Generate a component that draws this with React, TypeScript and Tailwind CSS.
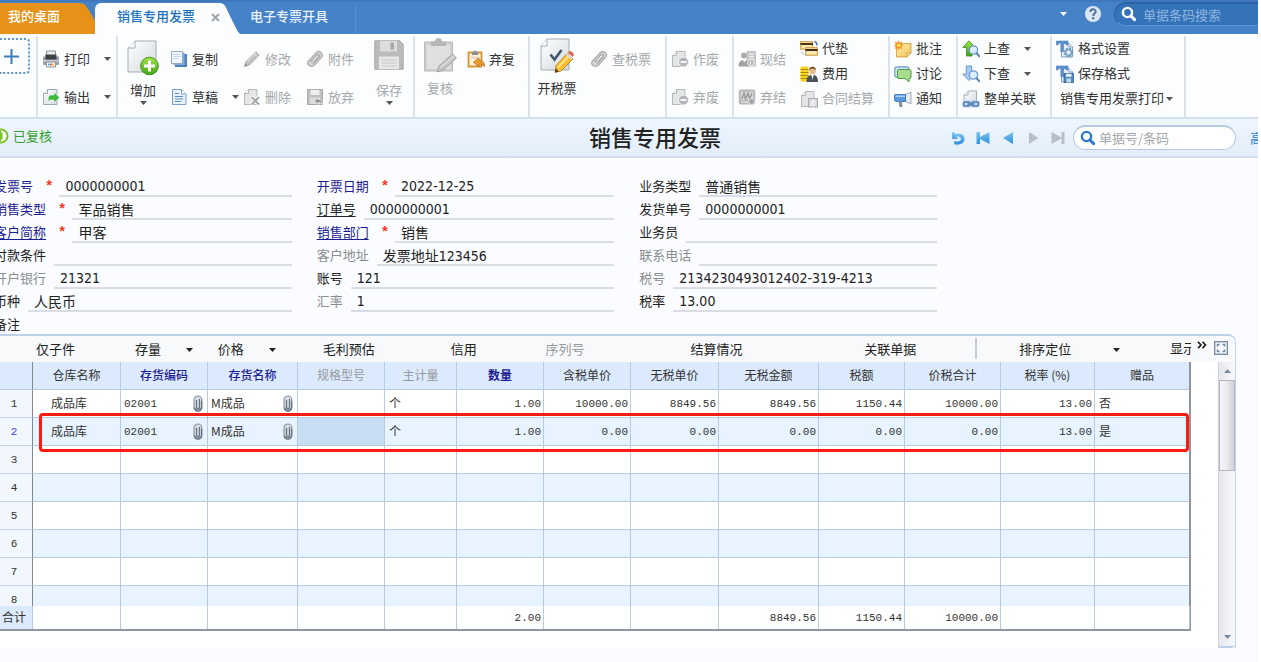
import React from "react";

type IconProps = { className?: string };

const ICON = "block h-[18px] w-[18px] shrink-0";

/* ---------- small helpers ---------- */

function Caret({ className = "text-[#555]" }: IconProps) {
  return (
    <svg viewBox="0 0 7 4" className={`block h-1 w-[7px] shrink-0 ${className}`} aria-hidden="true">
      <path d="M0 0h7L3.5 4z" fill="currentColor" />
    </svg>
  );
}

function SearchGlyph({ className = "" }: IconProps) {
  return (
    <svg viewBox="0 0 16 16" className={`block h-4 w-4 shrink-0 ${className}`} aria-hidden="true">
      <circle cx="6.5" cy="6.5" r="4.6" fill="none" stroke="currentColor" strokeWidth="2.4" />
      <path d="M10 10l3.6 3.600" stroke="currentColor" strokeWidth="3" strokeLinecap="round" />
    </svg>
  );
}

function Gradients() {
  return (
    <svg className="absolute h-0 w-0" aria-hidden="true">
      <defs>
        <linearGradient id="paper" x1="0" y1="0" x2="1" y2="1">
          <stop offset="0" stopColor="#ffffff" />
          <stop offset="1" stopColor="#d3dadd" />
        </linearGradient>
        <linearGradient id="green" x1="0" y1="0" x2="0" y2="1">
          <stop offset="0" stopColor="#a6e34b" />
          <stop offset="1" stopColor="#3fa512" />
        </linearGradient>
        <linearGradient id="navBlue" x1="0" y1="0" x2="0" y2="1">
          <stop offset="0" stopColor="#7cc4ee" />
          <stop offset="1" stopColor="#2f8fdc" />
        </linearGradient>
        <linearGradient id="note" x1="0" y1="0" x2="1" y2="1">
          <stop offset="0" stopColor="#fff0b8" />
          <stop offset="1" stopColor="#f2c04a" />
        </linearGradient>
      </defs>
    </svg>
  );
}

/* ---------- toolbar icons ---------- */

const PrinterIcon = () => (
  <svg viewBox="0 0 18 18" className={ICON}>
    <path d="M4.5 1h9v6h-9z" fill="#e9ebee" stroke="#8b8f96" />
    <path d="M1 6.5h16v7.2a1.3 1.3 0 0 1-1.3 1.3H2.300A1.300 1.300 0 0 1 1 13.700z" fill="#9aa0aa" />
    <path d="M3.500 4.500h11v5h-11z" fill="#3d4046" />
    <path d="M1 10h16v1.500H1z" fill="#c9cdd3" />
    <path d="M4.500 12h9v5h-9z" fill="#fff" stroke="#8b8f96" />
    <path d="M6 13.500h2v2H6z" fill="#4ab4e0" />
    <path d="M8 13.500h2v2H8z" fill="#e66" />
    <path d="M10 13.500h2v2h-2z" fill="#f0c040" />
  </svg>
);

const ExportIcon = () => (
  <svg viewBox="0 0 18 18" className={ICON}>
    <path d="M5.500 1.500H15v15H1.500V5.500z" fill="url(#paper)" stroke="#9aa9b5" />
    <path d="M5.500 1.500v4h-4" fill="#fff" stroke="#9aa9b5" />
    <path d="M9 7h3V4l5.500 5.500L12 15v-3H9c-2 0-2.500 1-2.500 2.500C5.500 10 6.500 7 9 7z" fill="#3fb93a" stroke="#fff" strokeWidth=".6" />
  </svg>
);

const CopyIcon = () => (
  <svg viewBox="0 0 18 18" className={ICON}>
    <path d="M5 4h12v13H5z" fill="#4f83bd" />
    <path d="M3.500 2.500h11v12.500h-11z" fill="#86acd6" />
    <path d="M1.500 1.500h11v12h-11z" fill="#eef5fc" stroke="#92acc6" />
    <path d="M3.500 4.500h7M3.500 6.500h7M3.500 8.500h5" stroke="#c5d7e8" />
  </svg>
);

const DraftIcon = () => (
  <svg viewBox="0 0 18 18" className={ICON}>
    <path d="M2.500 1.500h9l4.500 4.500v10.500H2.500z" fill="#e8f1fb" stroke="#7d9fc4" />
    <path d="M11.500 1.500V6H16" fill="#fff" stroke="#7d9fc4" />
    <path d="M5 5.500h4M5 8.500h8M5 11h8M5 13.500h6" stroke="#5b8cc4" strokeWidth="1.200" />
  </svg>
);

const GrayPencilIcon = () => (
  <svg viewBox="0 0 18 18" className={ICON}>
    <path d="M1.500 16.500l1.500-5L13 1.800l3.300 3.200L6.500 15z" fill="#bfc1c3" stroke="#a3a5a7" strokeWidth=".8" />
    <path d="M11.200 3.600l3.200 3.200M4 11.500l9-8.500" stroke="#e4e5e6" />
    <path d="M1.500 16.500l1-3 2 2z" fill="#8c8e90" />
  </svg>
);

const GrayClipIcon = () => (
  <svg viewBox="0 0 18 18" className={ICON}>
    <path d="M2.500 11L10.500 2.500c3-2.500 7.500 1 5 4.800L8 15.500C4.500 18 0 14.500 2.500 11z" fill="#d3d5d6" stroke="#adafb1" strokeWidth="1.300" />
    <path d="M5 11.500l6-6.500c1.300-1 3 .3 2 1.800l-6 6.700" fill="none" stroke="#9fa1a3" strokeWidth="1.200" />
    <path d="M7 10.500l4.500-5" stroke="#f4f5f6" strokeWidth="1" />
  </svg>
);

const GrayDoc = () => (
  <>
    <path d="M5.500 1.500H14v15H1.500v-11z" fill="#e3e5e7" stroke="#b4b7ba" />
    <path d="M5.500 1.500v4h-4" fill="#f5f6f7" stroke="#b4b7ba" />
  </>
);

const DeleteIcon = () => (
  <svg viewBox="0 0 18 18" className={ICON}>
    <GrayDoc />
    <path d="M8 8.500l8 8M16 8.500l-8 8" stroke="#fff" strokeWidth="3.600" />
    <path d="M8.500 9l7.500 7.500M16 9l-7.500 7.500" stroke="#a6a9ac" strokeWidth="2" />
  </svg>
);

const GiveUpIcon = () => (
  <svg viewBox="0 0 18 18" className={ICON}>
    <path d="M1.500 1.500h15v15h-15z" fill="#bfc1c3" stroke="#a7a9ab" />
    <path d="M4.500 2h9v5h-9z" fill="#ecedee" />
    <path d="M4 9.500h10V16H4z" fill="#dcdddf" />
    <path d="M16.500 16c0-3-1.500-4.500-4-4.500V9.500L8.500 13l4 3.500v-2c2 0 3 .5 4 1.500z" fill="#8f9194" stroke="#f3f4f5" strokeWidth=".7" />
  </svg>
);

const UnauditIcon = () => (
  <svg viewBox="0 0 18 18" className={ICON}>
    <path d="M1.500 2.500h13v14h-13z" fill="#fbf0dc" stroke="#d9952f" strokeWidth="1.800" />
    <path d="M5 3.500V2h1.500a1.500 1.500 0 0 1 3 0H11v3H5z" fill="#8b8d92" />
    <path d="M4 6.500h7v2H4z" fill="#e2d4bd" />
    <path d="M17.500 16.500c0-4-2-5.800-5.500-5.800V7.800L6.500 12.300l5.500 4.500V14c2.500 0 4 .8 5.500 2.500z" fill="#f0a02a" stroke="#b46a12" strokeWidth=".8" />
  </svg>
);

const VoidIcon = () => (
  <svg viewBox="0 0 18 18" className={ICON}>
    <GrayDoc />
    <circle cx="12.500" cy="12" r="5" fill="#b3b5b8" stroke="#f5f6f7" />
    <path d="M9.500 11h6v2h-6z" fill="#f5f6f7" />
  </svg>
);

const SettleIcon = () => (
  <svg viewBox="0 0 18 18" className={ICON}>
    <path d="M9 1.500h8.500V16H9z" fill="#c8cacc" stroke="#b0b2b4" strokeWidth=".7" />
    <path d="M11 4h5M11 6.500h5M11 9h5" stroke="#eee" />
    <circle cx="6" cy="5.500" r="3" fill="#a9abad" />
    <path d="M.5 16.500c0-4 1.500-6 4-6.500l2 2 2-2c2.500.5 3.500 2.500 3.500 6.500z" fill="#a2a4a6" />
    <circle cx="13" cy="12.500" r="3.500" fill="#b8babc" stroke="#eee" />
    <path d="M12.500 10.500v4" stroke="#eee" />
  </svg>
);

const UnsettleIcon = () => (
  <svg viewBox="0 0 18 18" className={ICON}>
    <rect x=".8" y="1.500" width="16.400" height="15" rx="2" fill="#b5b7b9" />
    <rect x="2.800" y="3.500" width="12.400" height="8.500" fill="#d6d8d9" />
    <path d="M4 11l2-6 1.500 6L10 5l1.500 6L14 5" fill="none" stroke="#97999b" strokeWidth="1.400" />
    <path d="M3 14h8" stroke="#eee" />
    <circle cx="13.500" cy="13.500" r="3" fill="#a3a5a7" stroke="#eee" strokeWidth=".8" />
  </svg>
);

const AdvanceIcon = () => (
  <svg viewBox="0 0 18 18" className={ICON}>
    <rect x=".7" y="1.700" width="12" height="7.500" fill="#fbe6b0" stroke="#c99a3d" />
    <path d="M.5 3h12.400v2H.5z" fill="#4a3413" />
    <rect x="5.700" y="7.700" width="11.600" height="7.500" fill="#fbe6b0" stroke="#c99a3d" />
    <path d="M5.500 9h12v2H5.500z" fill="#3a2b15" />
    <path d="M14.500 1.500c2 .5 2.500 2 2.500 4" fill="none" stroke="#4a7ab5" strokeWidth="1.500" />
    <path d="M1.500 11.500c.3 2 1.200 2.800 3 3" fill="none" stroke="#c9ccd0" strokeWidth="1.200" />
  </svg>
);

const FeeIcon = () => (
  <svg viewBox="0 0 18 18" className={ICON}>
    <path d="M.5 1.500h8v15h-8z" fill="#f5d51f" />
    <path d="M.5 4.500h8M.5 7.500h8M.5 10.500h8M.5 13.500h8" stroke="#a98d0a" />
    <circle cx="12.500" cy="6" r="3.300" fill="#e8b98a" />
    <path d="M9 5.500c0-5 7-5 7 0-1-1.500-2-2-3.500-2S10 4 9 5.500z" fill="#6b3d14" />
    <path d="M6.500 17c0-4.500 1.500-6.500 4.500-7l1.500 2 1.500-2c2.500.5 4 2.500 4 7z" fill="#4b5158" />
    <path d="M11.500 10h2l-1 5z" fill="#fff" />
  </svg>
);

const ContractIcon = () => (
  <svg viewBox="0 0 18 18" className={ICON}>
    <GrayDoc />
    <rect x="8.500" y="8.500" width="9" height="8.500" fill="#d2d4d6" stroke="#a9acaf" />
    <path d="M10 11h6M10 13h6M10 15h6M13 9v8" stroke="#f5f6f7" />
  </svg>
);

const NoteIcon = () => (
  <svg viewBox="0 0 18 18" className={ICON}>
    <path d="M2.500 3.500H17V13l-4 4H2.500z" fill="url(#note)" stroke="#c8963a" strokeWidth=".8" />
    <path d="M17 13h-4v4z" fill="#fff3cf" stroke="#c8963a" strokeWidth=".8" />
    <path d="M4.500 0l1.200 2.700L8.500 1.500 7.300 4.300l2.500 1-2.500 1.200 1 2.700-2.700-1.200L4.500 10.500 3.300 8 .8 9l1-2.600L0 5.200l1.800-1L.8 1.500l2.600 1.200z" fill="#f6921e" />
    <circle cx="4.700" cy="5.200" r="1.800" fill="#ffe25a" />
  </svg>
);

const DiscussIcon = () => (
  <svg viewBox="0 0 18 18" className={ICON}>
    <rect x=".8" y="1.800" width="14" height="10.500" rx="2" fill="#cfe2f5" stroke="#6f9bc9" strokeWidth="1.200" />
    <path d="M5 4.500h10.500a1.500 1.500 0 0 1 1.500 1.500v6a1.500 1.500 0 0 1-1.500 1.500H15v3.500l-4-3.500H5A1.500 1.500 0 0 1 3.500 12V6A1.500 1.500 0 0 1 5 4.500z" fill="#a8dc8e" stroke="#4e9a45" />
  </svg>
);

const NotifyIcon = () => (
  <svg viewBox="0 0 18 18" className={ICON}>
    <path d="M11.500 4.500L17 2v12l-5.500-2.500z" fill="#e6ebf0" stroke="#8d99a6" strokeWidth=".8" />
    <path d="M1 4.500h10.500v7H2.500A2 2 0 0 1 .5 9.500V5z" fill="#5799dc" stroke="#2e6cb0" strokeWidth=".8" />
    <path d="M1.500 5.500h9.500v1.500h-9.500z" fill="#a9cff3" />
    <path d="M4.500 11.500h3.500l.5 5.500H5.500z" fill="#8793a0" />
  </svg>
);

const Lens = () => (
  <>
    <circle cx="11.500" cy="10" r="4.200" fill="#dcecfa" stroke="#6f9cc8" strokeWidth="1.300" />
    <path d="M14.500 13l2.800 3.300" stroke="#5f86ae" strokeWidth="2" strokeLinecap="round" />
  </>
);

const UpIcon = () => (
  <svg viewBox="0 0 18 18" className={ICON}>
    <path d="M7 .8l6.300 6.700H10V16H4.500V7.500H.8z" fill="url(#green)" stroke="#37871a" strokeWidth=".8" />
    <Lens />
  </svg>
);

const DownIcon = () => (
  <svg viewBox="0 0 18 18" className={ICON}>
    <path d="M7 15.500L.8 9h3.500V1h5.400v8h3.500z" fill="#a9cdf0" stroke="#5b8fc6" strokeWidth=".9" />
    <Lens />
  </svg>
);

const LinkDocIcon = () => (
  <svg viewBox="0 0 18 18" className={ICON}>
    <path d="M6 1h8.500v13H2V5z" fill="url(#paper)" stroke="#9fb0c2" />
    <path d="M6 1v4H2" fill="#fff" stroke="#9fb0c2" />
    <path d="M.5 10.500h17v7H.5z" fill="#c3d6ec" />
    <rect x="1.500" y="12" width="6.500" height="4" rx="1.500" fill="none" stroke="#4f7fb8" strokeWidth="1.500" />
    <rect x="10" y="12" width="6.500" height="4" rx="1.500" fill="none" stroke="#4f7fb8" strokeWidth="1.500" />
    <path d="M5.500 14h7" stroke="#4f7fb8" strokeWidth="1.500" />
  </svg>
);

const FormatBase = () => (
  <>
    <path d="M5.500 3.500h7.500l3.500 3.500v10h-11z" fill="#e3edf8" stroke="#7fa0c2" />
    <path d="M13 3.500V7h3.500" fill="#fff" stroke="#7fa0c2" />
    <path d="M.5 1h11.500v4h-1.700V3.300H7.500v8.200h-2.700V3.300H2.200V5H.5z" fill="#5c92d0" stroke="#3a70b2" strokeWidth=".5" />
  </>
);

const FormatSetIcon = () => (
  <svg viewBox="0 0 18 18" className={ICON}>
    <FormatBase />
    <circle cx="12.500" cy="12.500" r="3.800" fill="#d9e6f3" stroke="#6b95c2" strokeWidth="2" strokeDasharray="2 1" />
    <circle cx="12.500" cy="12.500" r="3" fill="#bcd3ea" stroke="#6b95c2" />
    <circle cx="12.500" cy="12.500" r="1.200" fill="#fff" />
  </svg>
);

const FormatSaveIcon = () => (
  <svg viewBox="0 0 18 18" className={ICON}>
    <FormatBase />
    <path d="M8 8.500h9.500V17.500H8z" fill="#5487bf" stroke="#2f5f96" strokeWidth=".8" />
    <path d="M10 8.800h5.500v3H10z" fill="#e9f1f9" />
    <path d="M10.500 13.500h4.500v4h-4.500z" fill="#c8daec" />
  </svg>
);

const BigAddIcon = () => (
  <svg viewBox="0 0 32 36" className="block h-9 w-8">
    <path d="M8 1h21v31H1V8z" fill="url(#paper)" stroke="#a3acb3" />
    <path d="M8 1v7H1" fill="#fff" stroke="#a3acb3" />
    <circle cx="22.500" cy="26" r="8.800" fill="url(#green)" stroke="#3f9418" />
    <path d="M22.500 20.500v11M17 26h11" stroke="#fff" strokeWidth="3" />
  </svg>
);

const BigSaveIcon = () => (
  <svg viewBox="0 0 30 30" className="block h-[30px] w-[30px]">
    <path d="M.8.8h25l3.400 3.500v24.900H.8z" fill="#b9bbbd" stroke="#a5a7a9" />
    <path d="M6 1h17v10.500H6z" fill="#dcddde" />
    <path d="M16.500 2.500h3.500v7h-3.500z" fill="#a5a7a9" />
    <path d="M5 16.500h20V29H5z" fill="#e6e7e8" />
    <path d="M7.500 20h15M7.500 23h15M7.500 26h15" stroke="#c6c8ca" />
  </svg>
);

const BigAuditIcon = () => (
  <svg viewBox="0 0 34 36" className="block h-9 w-[34px]">
    <path d="M1.500 4h28v29h-28z" fill="#cfd0d2" stroke="#b8babc" />
    <path d="M4 7h23v24H4z" fill="#dfe0e1" />
    <path d="M8 3.500h4a3.500 3.500 0 0 1 7 0h4V8H8z" fill="#b4b6b8" />
    <path d="M14 34l2-6L29.500 16l4 4L20 32z" fill="#c6c7c9" stroke="#9fa1a3" />
    <path d="M17.500 29.500L31 18" stroke="#efefef" />
  </svg>
);

const BigInvoiceIcon = () => (
  <svg viewBox="0 0 34 36" className="block h-9 w-[34px]">
    <path d="M7 1h22v31H1V8z" fill="url(#paper)" stroke="#a3acb3" />
    <path d="M7 1v7H1" fill="#fff" stroke="#a3acb3" />
    <path d="M10.500 16.500l4 5 7-9.500" fill="none" stroke="#42566e" strokeWidth="2.600" />
    <path d="M15 34.500l1-7L27 15.500l6 5.500L21 33z" fill="#f9bd2e" stroke="#b9781a" strokeWidth=".8" />
    <path d="M18 29.500L29 18" stroke="#fde58a" strokeWidth="2" />
    <path d="M28 14.500l1.500-1.200c1.800-.8 5 2.300 4.200 4.200L32.500 19z" fill="#e2604a" />
    <path d="M26.500 16l5.500 5" stroke="#d8dce0" strokeWidth="1.800" />
    <path d="M15 34.500l.5-4 3.500 3z" fill="#4a3a2a" />
  </svg>
);

/* ---------- toolbar building blocks ---------- */

type ToolProps = { icon?: React.ReactNode; label: string; disabled?: boolean; caret?: boolean; wide?: boolean; tall?: boolean };

function Tool({ icon, label, disabled, caret, wide, tall }: ToolProps) {
  return (
    <button
      type="button"
      disabled={disabled}
      className={`flex items-center whitespace-nowrap text-left text-[13px] leading-none ${tall ? "h-[38px]" : "h-[25px]"} ${
        disabled ? "text-[#a6a8aa]" : "text-[#333]"
      }`}
    >
      {icon}
      <span className="ml-1 pb-0.5">{label}</span>
      {caret && (
        <span className={wide ? "ml-3.5" : "ml-0.5"}>
          <Caret />
        </span>
      )}
    </button>
  );
}

function BigTool({ icon, label, disabled, caret }: ToolProps) {
  return (
    <button
      type="button"
      disabled={disabled}
      className={`flex w-[42px] shrink-0 flex-col items-center whitespace-nowrap text-[13px] leading-none ${
        disabled ? "text-[#a6a8aa]" : "text-[#333]"
      }`}
    >
      <span className="flex h-[43px] items-start">{icon}</span>
      <span>{label}</span>
      {caret && (
        <span className="mt-[5px]">
          <Caret />
        </span>
      )}
    </button>
  );
}

function Group({ className, children }: { className: string; children: React.ReactNode }) {
  return <div className={`flex shrink-0 border-r-2 border-[#dde2e8] ${className}`}>{children}</div>;
}

const Rows2 = ({ children, className = "" }: { children: React.ReactNode; className?: string }) => (
  <div className={`flex flex-col items-start pt-1 ${className}`}>{children}</div>
);

const Rows3 = ({ children, className = "" }: { children: React.ReactNode; className?: string }) => (
  <div className={`flex flex-col items-start ${className}`}>{children}</div>
);

/* ---------- sections ---------- */

function TopBar() {
  return (
    <header className="flex h-[34px] items-stretch justify-between border-t-2 border-[#3f78bd] bg-[#4682c8] text-[13px]">
      <nav className="flex items-stretch pt-px">
        <button type="button" className="flex w-20 items-center bg-[#e89119] pb-1.5 pl-2 font-medium whitespace-nowrap text-white">
          我的桌面
        </button>
        <svg viewBox="0 0 15 31" className="block h-[31px] w-[15px]" preserveAspectRatio="none">
          <path d="M0 0c7 1 8 6 15 18v13H0z" fill="#e89119" />
        </svg>
        <div className="flex w-[125px] items-center justify-between rounded-tl-md bg-[#fbfdff] pb-1.5 pl-[22px]">
          <button type="button" className="font-medium whitespace-nowrap text-[#2173bd]">
            销售专用发票
          </button>
          <button type="button" aria-label="关闭" className="pt-1 text-[#a0a4aa]">
            <svg viewBox="0 0 9 9" className="block h-[9px] w-[9px]">
              <path d="M1 1l7 7M8 1L1 8" stroke="currentColor" strokeWidth="2" />
            </svg>
          </button>
        </div>
        <svg viewBox="0 0 22 31" className="block h-[31px] w-[22px]" preserveAspectRatio="none">
          <path d="M0 0c6 1 6 5 9 11l7 14c2 4 3 6 6 6H0z" fill="#fbfdff" />
        </svg>
        <button
          type="button"
          className="flex w-[114px] items-center border-r border-[#5790d0] pb-1.5 pl-2 font-medium whitespace-nowrap text-[#e9f2fb]"
        >
          电子专票开具
        </button>
      </nav>
      <div className="flex items-start">
        <button type="button" aria-label="更多" className="mt-2.5">
          <Caret className="text-white" />
        </button>
        <button type="button" aria-label="帮助" className="mt-[3px] ml-[17px]">
          <svg viewBox="0 0 18 18" className="block h-[18px] w-[18px]">
            <circle cx="9" cy="9" r="8" fill="#dbe7f4" />
            <path d="M6.300 7c0-3.800 5.600-3.500 5.400-.3C11.600 8.500 9.200 8.600 9.200 11" fill="none" stroke="#4a6f9f" strokeWidth="1.900" />
            <circle cx="9.200" cy="13.300" r="1.200" fill="#4a6f9f" />
          </svg>
        </button>
        <label className="ml-3 flex h-6 w-[144px] items-center rounded-l-full border-t-2 border-b border-l border-t-[#2c62a3] border-b-[#5a92d2] border-l-[#2c62a3] bg-[#3573b8] pb-px pl-1.5">
          <SearchGlyph className="text-white" />
          <input
            aria-label="单据条码搜索"
            placeholder="单据条码搜索"
            className="ml-1.5 w-full min-w-0 bg-transparent text-[13px] leading-none outline-none placeholder:text-[#8fb6df]"
          />
        </label>
      </div>
    </header>
  );
}

function Toolbar() {
  return (
    <div className="flex h-[83px] items-stretch border-b-0 bg-[#fbfdff] pt-0.5">
      <Group className="w-[38px]">
        <button
          type="button"
          aria-label="添加"
          className="mt-0.5 flex h-9 w-[30px] items-center justify-start rounded-r border-2 border-l-0 border-dotted border-[#5f95cf] pl-1"
        >
          <svg viewBox="0 0 15 15" className="block h-[15px] w-[15px]">
            <path d="M7.500 0v15M0 7.500h15" stroke="#3f7cbd" strokeWidth="2" />
          </svg>
        </button>
      </Group>
      <Group className="w-[80px] pl-1">
        <Rows2>
          <Tool tall icon={<PrinterIcon />} label="打印" caret wide />
          <Tool tall icon={<ExportIcon />} label="输出" caret wide />
        </Rows2>
      </Group>
      <Group className="w-[297px] pt-1 pl-1">
        <BigTool icon={<BigAddIcon />} label="增加" caret />
        <div className="-mt-1 ml-1.5 flex">
          <Rows2 className="w-[73px]">
            <Tool tall icon={<CopyIcon />} label="复制" />
            <Tool tall icon={<DraftIcon />} label="草稿" caret wide />
          </Rows2>
          <Rows2 className="w-[63px]">
            <Tool tall icon={<GrayPencilIcon />} label="修改" disabled />
            <Tool tall icon={<DeleteIcon />} label="删除" disabled />
          </Rows2>
          <Rows2 className="w-[62px]">
            <Tool tall icon={<GrayClipIcon />} label="附件" disabled />
            <Tool tall icon={<GiveUpIcon />} label="放弃" disabled />
          </Rows2>
        </div>
        <BigTool icon={<BigSaveIcon />} label="保存" caret disabled />
      </Group>
      <Group className="w-[115px] pl-1">
        <div className="pt-0.5">
          <BigTool icon={<BigAuditIcon />} label="复核" disabled />
        </div>
        <Rows2 className="ml-1.5">
          <Tool tall icon={<UnauditIcon />} label="弃复" />
        </Rows2>
      </Group>
      <Group className="w-[137px] pl-1.5">
        <div className="pt-0.5">
          <BigTool icon={<BigInvoiceIcon />} label="开税票" />
        </div>
        <Rows2 className="ml-3">
          <Tool tall icon={<GrayClipIcon />} label="查税票" disabled />
        </Rows2>
      </Group>
      <Group className="w-[67px] pl-1">
        <Rows2>
          <Tool tall icon={<VoidIcon />} label="作废" disabled />
          <Tool tall icon={<VoidIcon />} label="弃废" disabled />
        </Rows2>
      </Group>
      <Group className="w-[156px] pl-1">
        <Rows2 className="w-[62px]">
          <Tool tall icon={<SettleIcon />} label="现结" disabled />
          <Tool tall icon={<UnsettleIcon />} label="弃结" disabled />
        </Rows2>
        <Rows3>
          <Tool icon={<AdvanceIcon />} label="代垫" />
          <Tool icon={<FeeIcon />} label="费用" />
          <Tool icon={<ContractIcon />} label="合同结算" disabled />
        </Rows3>
      </Group>
      <Group className="w-[68px] pl-1">
        <Rows3>
          <Tool icon={<NoteIcon />} label="批注" />
          <Tool icon={<DiscussIcon />} label="讨论" />
          <Tool icon={<NotifyIcon />} label="通知" />
        </Rows3>
      </Group>
      <Group className="w-[94px] pl-1">
        <Rows3>
          <Tool icon={<UpIcon />} label="上查" caret wide />
          <Tool icon={<DownIcon />} label="下查" caret wide />
          <Tool icon={<LinkDocIcon />} label="整单关联" />
        </Rows3>
      </Group>
      <Group className="w-[134px] pl-1">
        <Rows3>
          <Tool icon={<FormatSetIcon />} label="格式设置" />
          <Tool icon={<FormatSaveIcon />} label="保存格式" />
          <Tool label="销售专用发票打印" caret />
        </Rows3>
      </Group>
    </div>
  );
}

function NavButton({ label, disabled, children }: { label: string; disabled?: boolean; children: React.ReactNode }) {
  return (
    <button type="button" aria-label={label} disabled={disabled}>
      <svg viewBox="0 0 14 14" className="block h-3.5 w-3.5">
        {children}
      </svg>
    </button>
  );
}

function TitleBar() {
  return (
    <div className="grid h-[41px] grid-cols-[589fr_669fr] items-center border-y-2 border-[#d0deed] bg-gradient-to-b from-[#eef5fd] to-[#e3eefa]">
      <div className="flex items-center pb-1 text-[13px] text-[#35a02c]">
        <svg viewBox="0 0 16 16" className="-ml-[7px] block h-4 w-4">
          <circle cx="8" cy="8" r="6.500" fill="#fff" stroke="#7ac41e" strokeWidth="2" />
          <path d="M8 2.500v11a5.500 5.500 0 0 1 0-11z" fill="#7ac41e" />
          <path d="M8.500 4.500v7" stroke="#7ac41e" strokeWidth="2" />
        </svg>
        <span className="ml-1">已复核</span>
      </div>
      <div className="flex min-w-0 items-center justify-between">
        <h1 className="pb-1 text-[22px] leading-none font-medium whitespace-nowrap text-[#222]">销售专用发票</h1>
        <div className="flex shrink-0 items-center">
          <div className="flex items-center gap-[11px]">
            <NavButton label="刷新">
              <path d="M1 1.500h3.200v2C8.500 1.600 13.500 3.500 13.500 8c0 4.500-5 6.500-10.300 5.300v-3.200C7 11 10 10.200 10 8S7.500 5 5.300 5.700L7.500 8H1z" fill="url(#navBlue)" />
            </NavButton>
            <NavButton label="首张">
              <path d="M.5 1H4V6L13.500 1v12L4 8V13H.5z" fill="url(#navBlue)" />
            </NavButton>
            <NavButton label="上一张">
              <path d="M12 1v12L2 7z" fill="url(#navBlue)" />
            </NavButton>
            <NavButton label="下一张" disabled>
              <path d="M3 1v12L12.500 7z" fill="#b9bfc6" />
            </NavButton>
            <NavButton label="末张" disabled>
              <path d="M13.500 1h-3v5.500L.5 1v12l10-5.500V13h3z" fill="#b9bfc6" />
            </NavButton>
          </div>
          <label className="ml-2 flex h-[25px] w-[163px] items-center rounded-full border border-t-2 border-[#b5c9e0] bg-white pb-px pl-1.5">
            <SearchGlyph className="text-[#2f7ac8]" />
            <input
              aria-label="单据号/条码"
              placeholder="单据号/条码"
              className="ml-[3px] w-full min-w-0 bg-transparent text-[13px] leading-none outline-none placeholder:text-[#a3a7ac]"
            />
          </label>
          <a href="#advanced" className="ml-3.5 w-2 overflow-hidden text-[13px] whitespace-nowrap text-[#1a80d8]">
            高级
          </a>
        </div>
      </div>
    </div>
  );
}

type Tone = "navy" | "black" | "gray" | "navyLink" | "blackLink";
const TONE: Record<Tone, string> = {
  navy: "text-[#1d1d93]",
  black: "text-[#222]",
  gray: "text-[#8b8d90]",
  navyLink: "text-[#1d1d93] underline underline-offset-2",
  blackLink: "text-[#222] underline underline-offset-2",
};

type Field = { id: string; label: string; tone: Tone; value: string; required?: boolean };

const FIELDS: Field[][] = [
  [
    { id: "invoiceNo", label: "发票号", tone: "navy", value: "0000000001", required: true },
    { id: "saleType", label: "销售类型", tone: "navy", value: "军品销售", required: true },
    { id: "customer", label: "客户简称", tone: "navyLink", value: "甲客", required: true },
    { id: "payTerm", label: "付款条件", tone: "black", value: "" },
    { id: "bank", label: "开户银行", tone: "gray", value: "21321" },
    { id: "currency", label: "币种", tone: "black", value: "人民币" },
  ],
  [
    { id: "date", label: "开票日期", tone: "navy", value: "2022-12-25", required: true },
    { id: "orderNo", label: "订单号", tone: "blackLink", value: "0000000001" },
    { id: "dept", label: "销售部门", tone: "navyLink", value: "销售", required: true },
    { id: "address", label: "客户地址", tone: "gray", value: "发票地址123456" },
    { id: "account", label: "账号", tone: "black", value: "121" },
    { id: "rate", label: "汇率", tone: "gray", value: "1" },
  ],
  [
    { id: "bizType", label: "业务类型", tone: "black", value: "普通销售" },
    { id: "shipNo", label: "发货单号", tone: "black", value: "0000000001" },
    { id: "salesman", label: "业务员", tone: "black", value: "" },
    { id: "phone", label: "联系电话", tone: "gray", value: "" },
    { id: "taxNo", label: "税号", tone: "gray", value: "2134230493012402-319-4213" },
    { id: "taxRate", label: "税率", tone: "black", value: "13.00" },
  ],
];

function InvoiceForm() {
  return (
    <form className="-ml-[6px] pt-4 text-[13px]">
      <div className="grid max-w-[943px] grid-cols-3 gap-x-[25px]">
        {FIELDS.map((col, i) => (
          <div key={i} className="flex flex-col">
            {col.map((f) => (
              <div key={f.id} className="flex h-[23px] items-start">
                <label htmlFor={f.id} className={`shrink-0 leading-[23px] ${TONE[f.tone]}`}>
                  {f.label}
                </label>
                {f.required && (
                  <span className="ml-3 pt-0.5 font-['Liberation_Mono',monospace] text-sm leading-[23px] font-bold text-[#f5331c]">*</span>
                )}
                <input
                  id={f.id}
                  defaultValue={f.value}
                  className={`h-[23px] min-w-0 flex-1 border-b-2 border-[#dadde5] bg-transparent pt-0.5 pl-1.5 font-['DejaVu_Sans_Condensed','Noto_Sans_CJK_SC',sans-serif] text-sm text-[#222] outline-none ${
                    f.required ? "ml-1.5" : "ml-2"
                  }`}
                />
              </div>
            ))}
          </div>
        ))}
      </div>
      <div className="flex h-[22px] items-start">
        <label htmlFor="remark" className="leading-[23px] text-[#222]">
          备注
        </label>
        <input id="remark" className="ml-2 min-w-0 flex-1 bg-transparent outline-none" />
      </div>
    </form>
  );
}

function GridToolbar() {
  const cell = "flex items-center whitespace-nowrap text-[13px] leading-none text-[#222]";
  return (
    <div className="flex h-[26px] items-center bg-[#f7f9fb] pb-0.5">
      <div className="grid min-w-0 flex-1 grid-cols-[99fr_83fr_105fr_128fr_95fr_145fr_174fr_111fr_44fr_151fr_21fr] items-center pl-9">
        <button type="button" className={cell}>仅子件</button>
        <button type="button" className={cell}>
          存量
          <span className="ml-[25px] pt-1"><Caret className="text-[#222]" /></span>
        </button>
        <button type="button" className={cell}>
          价格
          <span className="ml-[25px] pt-1"><Caret className="text-[#222]" /></span>
        </button>
        <button type="button" className={cell}>毛利预估</button>
        <button type="button" className={cell}>信用</button>
        <button type="button" disabled className="flex items-center text-[13px] leading-none whitespace-nowrap text-[#96999c]">
          序列号
        </button>
        <button type="button" className={cell}>结算情况</button>
        <button type="button" className={cell}>关联单据</button>
        <span className="h-[21px] border-l-2 border-[#c6cbd1]" />
        <button type="button" className={cell}>
          排序定位
          <span className="ml-[42px] pt-1"><Caret className="text-[#222]" /></span>
        </button>
        <button type="button" className="min-w-0 overflow-hidden text-left text-[13px] leading-4 whitespace-nowrap text-[#222]">
          显示
        </button>
      </div>
      <div className="flex w-11 shrink-0 items-center justify-between pr-[7px] pl-1.5">
        <button type="button" aria-label="展开更多" className="-mt-1.5">
          <svg viewBox="0 0 10 8" className="block h-2 w-2.5">
            <path d="M1 .8L4 4 1 7.200M5.500.8L8.500 4l-3 3.200" fill="none" stroke="#222" strokeWidth="1.700" />
          </svg>
        </button>
        <button type="button" aria-label="全屏">
          <svg viewBox="0 0 14 14" className="block h-3.5 w-3.5">
            <rect x=".7" y=".7" width="12.600" height="12.600" fill="#f4f7fa" stroke="#72879e" strokeWidth="1.300" />
            <path d="M3.500 5.500v-2h2M8.500 3.500h2v2M10.500 8.500v2h-2M5.500 10.500h-2v-2" fill="none" stroke="#72879e" strokeWidth="1.400" />
          </svg>
        </button>
      </div>
    </div>
  );
}

const HEADERS: { label: string; tone: string }[] = [
  { label: "仓库名称", tone: "font-normal text-[#333]" },
  { label: "存货编码", tone: "font-medium text-[#1d1d93]" },
  { label: "存货名称", tone: "font-medium text-[#1d1d93]" },
  { label: "规格型号", tone: "font-normal text-[#96999c]" },
  { label: "主计量", tone: "font-normal text-[#96999c]" },
  { label: "数量", tone: "font-bold text-[#1d1d93]" },
  { label: "含税单价", tone: "font-normal text-[#333]" },
  { label: "无税单价", tone: "font-normal text-[#333]" },
  { label: "无税金额", tone: "font-normal text-[#333]" },
  { label: "税额", tone: "font-normal text-[#333]" },
  { label: "价税合计", tone: "font-normal text-[#333]" },
  { label: "税率 (%)", tone: "font-normal text-[#333]" },
  { label: "赠品", tone: "font-normal text-[#333]" },
];

const ROWS: string[][] = [
  ["成品库", "02001", "M成品", "", "个", "1.00", "10000.00", "8849.56", "8849.56", "1150.44", "10000.00", "13.00", "否"],
  ["成品库", "02001", "M成品", "", "个", "1.00", "0.00", "0.00", "0.00", "0.00", "0.00", "13.00", "是"],
  ...Array.from({ length: 6 }, () => Array.from({ length: 13 }, () => "")),
];

const TOTALS = ["", "", "", "", "", "2.00", "", "", "8849.56", "1150.44", "10000.00", "", ""];

const Columns = () => (
  <colgroup>
    <col className="w-[33px]" />
    <col className="w-[88px]" />
    <col className="w-[87px]" />
    <col className="w-[90px]" />
    <col className="w-[87px]" />
    <col className="w-[72px]" />
    <col className="w-[87px]" />
    <col className="w-[87px]" />
    <col className="w-[88px]" />
    <col className="w-[100px]" />
    <col className="w-[86px]" />
    <col className="w-[96px]" />
    <col className="w-[94px]" />
    <col className="w-[95px]" />
  </colgroup>
);

const CellClip = () => (
  <svg viewBox="0 0 10 18" className="block h-[18px] w-2.5 shrink-0" role="img" aria-label="附件">
    <rect x="1" y="1" width="7.800" height="15.500" rx="3.900" fill="#d9dee4" stroke="#8b96a3" strokeWidth="1.200" />
    <path d="M3.500 5.500v6.500c0 2.200 3 2.200 3 0V4.500" fill="none" stroke="#66727f" strokeWidth="1.300" strokeLinecap="round" />
    <path d="M8.600 6v6.500a3.700 3.700 0 0 1-7.200 0" fill="none" stroke="#66727f" strokeWidth="1.200" />
  </svg>
);

const NUM = "font-['Liberation_Mono','Noto_Sans_CJK_SC',monospace] text-[11px]";

function bodyCell(value: string, c: number) {
  if (c >= 5 && c <= 11) return <div className={`pt-0.5 pr-0.5 text-right ${NUM}`}>{value}</div>;
  if (c === 0) return <div className="pb-0.5 pl-[18px] text-xs leading-none">{value}</div>;
  if (c === 1 || c === 2)
    return (
      <div className="flex items-center justify-between pr-1 pl-[3px]">
        <span className={c === 1 ? `pt-0.5 ${NUM}` : "pb-0.5 text-xs leading-none"}>{value}</span>
        {value && <CellClip />}
      </div>
    );
  return <div className="pb-0.5 pl-1 text-xs leading-none">{value}</div>;
}

function DetailGrid() {
  const table = "w-full table-fixed border-separate border-spacing-0 leading-none text-[#333]";
  return (
    <section className="mr-[22px] overflow-hidden rounded-tr-lg border-t-2 border-r border-[#bdd1e8] bg-white">
      <GridToolbar />
      <div className="flex h-[286px] items-stretch">
        <div className="min-w-0 flex-1">
          <div className="relative border-r-2 border-b-2 border-[#8f96a1]">
            <div className="h-[244px] overflow-hidden">
              <table className={table}>
                <Columns />
                <thead>
                  <tr className="h-7 bg-[#dceafd]">
                    <th className="border-r border-b border-r-[#83878d] border-b-[#b7cae4] p-0" aria-label="行号" />
                    {HEADERS.map((h) => (
                      <th
                        key={h.label}
                        className={`border-r border-b border-[#b7cae4] p-0 pb-0.5 text-xs leading-none whitespace-nowrap ${h.tone}`}
                      >
                        {h.label}
                      </th>
                    ))}
                  </tr>
                </thead>
                <tbody>
                  {ROWS.map((row, r) => (
                    <tr key={r} className={`h-7 ${r % 2 ? "bg-[#e7f4ff]" : "bg-white"}`}>
                      <th
                        className={`border-r border-b border-r-[#83878d] border-b-[#c2d2e8] bg-[#f2f7fe] p-0 pt-0.5 pr-1 text-center text-[11px] font-normal ${
                          r === 1 ? "text-[#3c3cff]" : "text-[#333]"
                        } font-['Liberation_Mono',monospace]`}
                      >
                        {r + 1}
                      </th>
                      {row.map((v, c) => (
                        <td key={c} className={`border-r border-b border-[#b7cae4] p-0 ${r === 1 && c === 3 ? "bg-[#c8def4]" : ""}`}>
                          {bodyCell(v, c)}
                        </td>
                      ))}
                    </tr>
                  ))}
                </tbody>
              </table>
            </div>
            <table className={table}>
              <Columns />
              <tbody>
                <tr className="h-[23px] bg-white">
                  <th className="border-r border-[#b7cae4] bg-[#dceafd] p-0 pr-1 pb-0.5 text-xs leading-none font-normal whitespace-nowrap">合计</th>
                  {TOTALS.map((v, c) => (
                    <td key={c} className={`border-r border-[#b7cae4] p-0 pt-0.5 pr-0.5 text-right ${NUM}`}>
                      {v}
                    </td>
                  ))}
                </tr>
              </tbody>
            </table>
            <div className="pointer-events-none absolute top-[51px] right-0 left-[39px] h-[39px] rounded border-[3px] border-[#fb1b10]" />
          </div>
        </div>
        <div className="ml-[27px] flex w-[17px] shrink-0 flex-col items-center rounded-br border-b-2 border-l border-b-[#bdd1e8] border-l-[#cdd3da] bg-gradient-to-r from-[#e6e8ee] to-[#f8f9fb]">
          <span className="flex h-[18px] items-center">
            <svg viewBox="0 0 7 4" className="block h-1 w-[7px]"><path d="M0 4h7L3.500 0z" fill="#7b8a9b" /></svg>
          </span>
          <span className="h-[91px] w-full border border-[#b4b8c0] bg-gradient-to-r from-[#f6f6f9] via-[#e9e9ef] to-[#cfd0da]" />
          <span className="mt-auto flex h-[18px] items-center">
            <Caret className="text-[#7b8a9b]" />
          </span>
        </div>
      </div>
    </section>
  );
}

export default function App() {
  return (
    <div className="min-h-screen overflow-hidden bg-white pr-[3px] font-['Noto_Sans_CJK_SC',sans-serif]">
      <Gradients />
      <div className="min-h-screen overflow-hidden bg-[#fafcff]">
        <TopBar />
        <Toolbar />
        <TitleBar />
        <InvoiceForm />
        <DetailGrid />
      </div>
    </div>
  );
}
